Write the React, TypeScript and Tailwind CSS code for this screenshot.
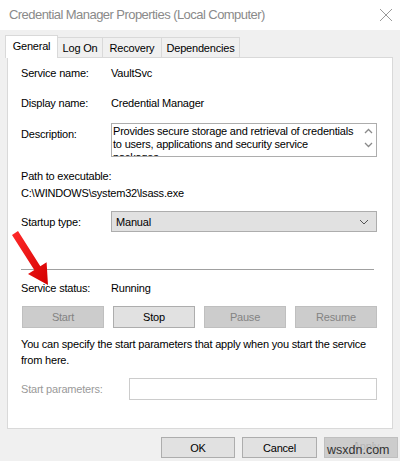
import React from 'react'

const disabledBtn =
  'h-[22px] w-[82px] border border-[#bfbfbf] bg-[#cccccc] text-[#838383] flex items-center justify-center'
const activeBtn =
  'h-[22px] w-[82px] border border-[#adadad] bg-[#e1e1e1] text-black flex items-center justify-center'

function Row({ label, children }: { label: string; children: React.ReactNode }) {
  return (
    <div className="flex items-center h-[16px]">
      <span className="w-[90px] shrink-0">{label}</span>
      {children}
    </div>
  )
}

export default function App() {
  return (
    <div
      className="relative w-[400px] h-[461px] overflow-hidden bg-[#f0f0f0] text-[11px] tracking-[-0.2px] text-black leading-[16px]"
      style={{ fontFamily: '"Liberation Sans", Arial, sans-serif' }}
    >
      {/* title bar */}
      <div className="h-[30px] bg-white flex items-center justify-between pl-[9px] pr-[6px]">
        <span className="text-[13px] tracking-[-0.55px] text-[#8a8a8a]">Credential Manager Properties (Local Computer)</span>
        <svg width="16" height="16" viewBox="0 0 16 16">
          <path d="M2 2 L14 14 M14 2 L2 14" stroke="#9a9a9a" strokeWidth="1" fill="none" />
        </svg>
      </div>

      {/* tabs */}
      <div className="flex items-end h-[22px] mt-[5px] pl-[5px] relative z-10">
        <div className="h-[23px] -mb-px w-[53px] bg-white border border-b-0 border-[#d9d9d9] flex items-center justify-center pb-[2px]">
          General
        </div>
        <div className="h-[20px] w-[45px] border-t border-r border-[#d9d9d9] flex items-center justify-center">
          Log On
        </div>
        <div className="h-[20px] w-[59px] border-t border-r border-[#d9d9d9] flex items-center justify-center">
          Recovery
        </div>
        <div className="h-[20px] w-[78px] border-t border-r border-[#d9d9d9] flex items-center justify-center">
          Dependencies
        </div>
      </div>

      {/* panel */}
      <div className="ml-[7px] w-[386px] h-[372px] bg-white border border-[#d9d9d9] pl-[13px]">
        <div className="mt-[7px]">
          <Row label="Service name:">VaultSvc</Row>
        </div>
        <div className="mt-[14px]">
          <Row label="Display name:">Credential Manager</Row>
        </div>
        <div className="mt-[12px] flex items-start">
          <span className="w-[90px] shrink-0 pt-[3px]">Description:</span>
          <div className="relative w-[266px] h-[34px] border border-[#adadad] overflow-hidden">
            <div className="pl-[1px] pr-[18px] leading-[13px] pt-[1px] whitespace-nowrap">
              Provides secure storage and retrieval of credentials
              <br />
              to users, applications and security service
              <br />
              packages
            </div>
            <div className="absolute right-[3px] top-[4px] flex flex-col items-center gap-[8px]">
              <svg width="9" height="6" viewBox="0 0 9 6">
                <path d="M1 5 L4.5 1.5 L8 5" stroke="#8a8a8a" strokeWidth="1.3" fill="none" />
              </svg>
              <svg width="9" height="6" viewBox="0 0 9 6">
                <path d="M1 1 L4.5 4.5 L8 1" stroke="#8a8a8a" strokeWidth="1.3" fill="none" />
              </svg>
            </div>
          </div>
        </div>
        <div className="mt-[11px] leading-[17px]">
          <div>Path to executable:</div>
          <div>C:\WINDOWS\system32\lsass.exe</div>
        </div>
        <div className="mt-[9px] flex items-center">
          <span className="w-[90px] shrink-0">Startup type:</span>
          <div className="w-[266px] h-[21px] border border-[#adadad] bg-[#e1e1e1] flex items-center justify-between pl-[4px] pr-[7px]">
            <span>Manual</span>
            <svg width="10" height="6" viewBox="0 0 10 6">
              <path d="M1 1 L5 5 L9 1" stroke="#555" strokeWidth="1" fill="none" />
            </svg>
          </div>
        </div>
        <div className="mt-[37px] w-[353px] h-px bg-[#a0a0a0]" />
        <div className="mt-[10px]">
          <Row label="Service status:">Running</Row>
        </div>
        <div className="mt-[10px] ml-px flex gap-[9px]">
          <div className={disabledBtn}>Start</div>
          <div className={activeBtn}>Stop</div>
          <div className={disabledBtn}>Pause</div>
          <div className={disabledBtn}>Resume</div>
        </div>
        <div className="mt-[8px]">
          You can specify the start parameters that apply when you start the service
          <br />
          from here.
        </div>
        <div className="mt-[10px] flex items-center">
          <span className="w-[108px] shrink-0 text-[#9a9a9a]">Start parameters:</span>
          <div className="w-[248px] h-[22px] border border-[#cccccc]" />
        </div>
      </div>

      {/* bottom buttons */}
      <div className="mt-[8px] flex justify-end gap-[7px] pr-[2px]">
        <div className="h-[21px] w-[74px] border border-[#adadad] bg-[#e1e1e1] flex items-center justify-center">OK</div>
        <div className="h-[21px] w-[75px] border border-[#adadad] bg-[#e1e1e1] flex items-center justify-center">
          Cancel
        </div>
        <div className="relative h-[21px] w-[74px] border border-[#bfbfbf] bg-[#cccccc] text-[#a8a8a8] flex items-start justify-center pl-[10px]">
          Apply
          <span className="absolute left-[2px] top-[5px] text-[12.5px] tracking-[0px] text-[#333] leading-[14px] bg-[#cccccc]/40">
            wsxdn.com
          </span>
        </div>
      </div>

      {/* red annotation arrow */}
      <svg className="absolute left-0 top-0 pointer-events-none" width="400" height="461" viewBox="0 0 400 461">
        <defs>
          <linearGradient id="ar" x1="0" y1="0" x2="1" y2="1">
            <stop offset="0" stopColor="#ff2a2a" />
            <stop offset="1" stopColor="#d40000" />
          </linearGradient>
        </defs>
        <polygon points="18,231 40.3,266.2 46.6,262.2 48,285 28,274 34.3,270 12,235" fill="url(#ar)" />
      </svg>
    </div>
  )
}
